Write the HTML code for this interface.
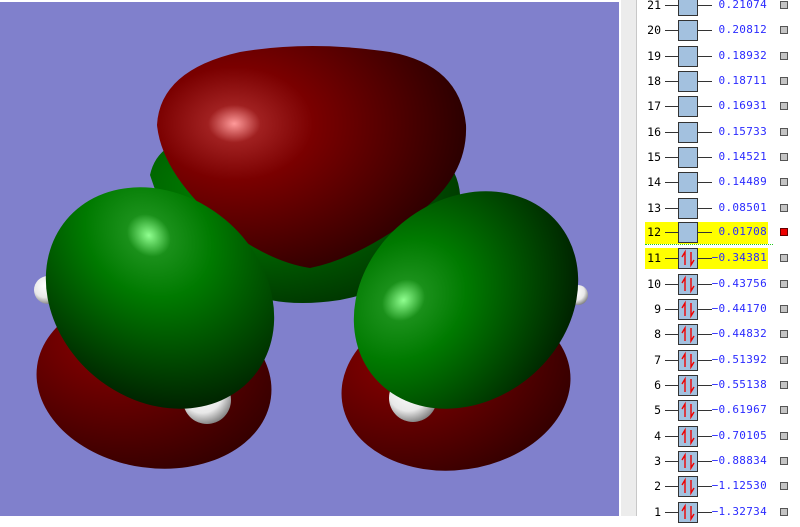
<!DOCTYPE html>
<html><head><meta charset="utf-8"><style>
body{margin:0;width:800px;height:516px;overflow:hidden;background:#fff;position:relative;font-family:"Liberation Sans",sans-serif}
#vp{position:absolute;left:0;top:2px;width:619px;height:514px;background:#8080cc}
#bd1{position:absolute;left:619px;top:0;width:2px;height:516px;background:#fff}
#bd2{position:absolute;left:621px;top:0;width:15px;height:516px;background:#ececec}
#bd3{position:absolute;left:636px;top:0;width:1px;height:516px;background:#c8c8c8}
.r{position:absolute;left:640px;width:160px;height:22px}
.n{position:absolute;left:0;width:21px;text-align:right;top:3px;font:11.5px "DejaVu Sans Mono","Liberation Mono",monospace;color:#000}
.l1{position:absolute;left:25px;width:13px;top:10px;height:1px;background:#333}
.l2{position:absolute;left:58px;width:14px;top:10px;height:1px;background:#333}
.b{position:absolute;left:38px;top:0;width:18px;height:19px;border:1px solid #333;background:#a3c1df}
.v{position:absolute;left:55px;width:72px;text-align:right;top:3px;font:11px "DejaVu Sans Mono","Liberation Mono",monospace;color:#2a2aff;letter-spacing:0.3px}
.c{position:absolute;left:140px;top:6px;width:6px;height:6px;border:1px solid #555;background:#c4c4c4}
.y{background:linear-gradient(#ff0,#ff0) 5px 0/123px 22px no-repeat}
</style></head><body>
<div id="vp">
<svg width="619" height="514" viewBox="0 2 619 514">
<defs>
<radialGradient id="rg" cx="0.25" cy="0.35" r="0.85"><stop offset="0" stop-color="#ff9a9a"/><stop offset="0.1" stop-color="#a02020"/><stop offset="0.3" stop-color="#7a0000"/><stop offset="1" stop-color="#1c0000"/></radialGradient>
<radialGradient id="gg" cx="0.3" cy="0.3" r="0.8"><stop offset="0" stop-color="#90ff90"/><stop offset="0.12" stop-color="#1a901a"/><stop offset="0.35" stop-color="#007a00"/><stop offset="1" stop-color="#002000"/></radialGradient>
<radialGradient id="rd" cx="0.3" cy="0.3" r="0.9"><stop offset="0" stop-color="#8a0000"/><stop offset="1" stop-color="#280000"/></radialGradient>
<radialGradient id="gd" cx="0.3" cy="0.3" r="0.9"><stop offset="0" stop-color="#008800"/><stop offset="1" stop-color="#002800"/></radialGradient>
<radialGradient id="wh" cx="0.4" cy="0.35" r="0.7"><stop offset="0" stop-color="#fff"/><stop offset="0.6" stop-color="#e8e8e8"/><stop offset="1" stop-color="#777"/></radialGradient>
</defs>
<circle cx="187" cy="100" r="20" fill="url(#wh)"/>
<circle cx="48" cy="290" r="14" fill="url(#wh)"/>
<circle cx="578" cy="295" r="10" fill="url(#wh)"/>
<ellipse cx="154" cy="382" rx="118" ry="86" fill="url(#rd)" transform="rotate(8 154 382)"/>
<ellipse cx="456" cy="386" rx="115" ry="84" fill="url(#rd)" transform="rotate(-8 456 386)"/>
<circle cx="207" cy="400" r="24" fill="url(#wh)"/>
<circle cx="413" cy="398" r="24" fill="url(#wh)"/>
<path d="M150 175 Q160 130 230 140 L400 140 Q465 150 460 210 Q440 280 340 300 Q300 306 270 300 Q180 270 150 175Z" fill="url(#gd)"/>
<path d="M157 125 Q160 70 240 52 Q310 40 390 52 Q460 65 466 125 Q468 175 420 212 Q360 258 310 268 Q270 262 225 228 Q162 175 157 125Z" fill="url(#rg)"/>
<ellipse cx="160" cy="298" rx="122" ry="102" fill="url(#gg)" transform="rotate(40 160 298)"/>
<ellipse cx="466" cy="300" rx="120" ry="100" fill="url(#gg)" transform="rotate(-40 466 300)"/>
</svg>
</div>
<div id="bd1"></div><div id="bd2"></div><div id="bd3"></div>

<div class="r" style="top:-5px"><span class="n">21</span><i class="l1"></i><i class="b"></i><i class="l2"></i><span class="v">0.21074</span><i class="c"></i></div>
<div class="r" style="top:20px"><span class="n">20</span><i class="l1"></i><i class="b"></i><i class="l2"></i><span class="v">0.20812</span><i class="c"></i></div>
<div class="r" style="top:46px"><span class="n">19</span><i class="l1"></i><i class="b"></i><i class="l2"></i><span class="v">0.18932</span><i class="c"></i></div>
<div class="r" style="top:71px"><span class="n">18</span><i class="l1"></i><i class="b"></i><i class="l2"></i><span class="v">0.18711</span><i class="c"></i></div>
<div class="r" style="top:96px"><span class="n">17</span><i class="l1"></i><i class="b"></i><i class="l2"></i><span class="v">0.16931</span><i class="c"></i></div>
<div class="r" style="top:122px"><span class="n">16</span><i class="l1"></i><i class="b"></i><i class="l2"></i><span class="v">0.15733</span><i class="c"></i></div>
<div class="r" style="top:147px"><span class="n">15</span><i class="l1"></i><i class="b"></i><i class="l2"></i><span class="v">0.14521</span><i class="c"></i></div>
<div class="r" style="top:172px"><span class="n">14</span><i class="l1"></i><i class="b"></i><i class="l2"></i><span class="v">0.14489</span><i class="c"></i></div>
<div class="r" style="top:198px"><span class="n">13</span><i class="l1"></i><i class="b"></i><i class="l2"></i><span class="v">0.08501</span><i class="c"></i></div>
<div class="r y" style="top:222px;height:23px"><span class="n">12</span><i class="l1"></i><i class="b"></i><i class="l2"></i><span class="v">0.01708</span><i class="c" style="background:#e00;border-color:#600"></i></div>
<div style="position:absolute;left:645px;top:244px;width:128px;border-top:1px dotted #2c2"></div>

<svg width="0" height="0" style="position:absolute"><defs><g id="ar"><path d="M6 16V3L3 8" stroke="#e00" stroke-width="1.4" fill="none"/><path d="M12 3V16L15 11" stroke="#e00" stroke-width="1.4" fill="none"/></g></defs></svg>

<div class="r y" style="top:248px;height:21px"><span class="n">11</span><i class="l1"></i><i class="b"><svg width="18" height="19"><use href="#ar"/></svg></i><i class="l2"></i><span class="v">−0.34381</span><i class="c"></i></div>
<div class="r" style="top:274px"><span class="n">10</span><i class="l1"></i><i class="b"><svg width="18" height="19"><use href="#ar"/></svg></i><i class="l2"></i><span class="v">−0.43756</span><i class="c"></i></div>
<div class="r" style="top:299px"><span class="n">9</span><i class="l1"></i><i class="b"><svg width="18" height="19"><use href="#ar"/></svg></i><i class="l2"></i><span class="v">−0.44170</span><i class="c"></i></div>
<div class="r" style="top:324px"><span class="n">8</span><i class="l1"></i><i class="b"><svg width="18" height="19"><use href="#ar"/></svg></i><i class="l2"></i><span class="v">−0.44832</span><i class="c"></i></div>
<div class="r" style="top:350px"><span class="n">7</span><i class="l1"></i><i class="b"><svg width="18" height="19"><use href="#ar"/></svg></i><i class="l2"></i><span class="v">−0.51392</span><i class="c"></i></div>
<div class="r" style="top:375px"><span class="n">6</span><i class="l1"></i><i class="b"><svg width="18" height="19"><use href="#ar"/></svg></i><i class="l2"></i><span class="v">−0.55138</span><i class="c"></i></div>
<div class="r" style="top:400px"><span class="n">5</span><i class="l1"></i><i class="b"><svg width="18" height="19"><use href="#ar"/></svg></i><i class="l2"></i><span class="v">−0.61967</span><i class="c"></i></div>
<div class="r" style="top:426px"><span class="n">4</span><i class="l1"></i><i class="b"><svg width="18" height="19"><use href="#ar"/></svg></i><i class="l2"></i><span class="v">−0.70105</span><i class="c"></i></div>
<div class="r" style="top:451px"><span class="n">3</span><i class="l1"></i><i class="b"><svg width="18" height="19"><use href="#ar"/></svg></i><i class="l2"></i><span class="v">−0.88834</span><i class="c"></i></div>
<div class="r" style="top:476px"><span class="n">2</span><i class="l1"></i><i class="b"><svg width="18" height="19"><use href="#ar"/></svg></i><i class="l2"></i><span class="v">−1.12530</span><i class="c"></i></div>
<div class="r" style="top:502px"><span class="n">1</span><i class="l1"></i><i class="b"><svg width="18" height="19"><use href="#ar"/></svg></i><i class="l2"></i><span class="v">−1.32734</span><i class="c"></i></div>
</body></html>
